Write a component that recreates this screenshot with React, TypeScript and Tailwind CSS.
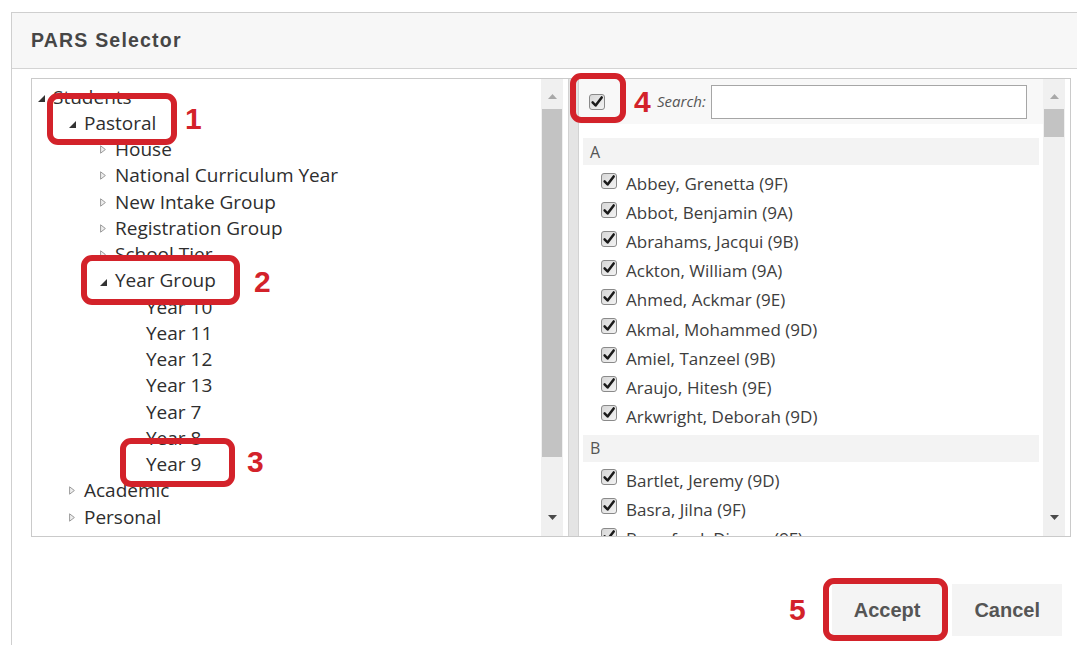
import React from 'react';

type TreeNode = { label: string; level: 0 | 1 | 2 | 3; state: 'open' | 'closed' | 'leaf' };

const TREE: TreeNode[] = [
  { label: 'Students', level: 0, state: 'open' },
  { label: 'Pastoral', level: 1, state: 'open' },
  { label: 'House', level: 2, state: 'closed' },
  { label: 'National Curriculum Year', level: 2, state: 'closed' },
  { label: 'New Intake Group', level: 2, state: 'closed' },
  { label: 'Registration Group', level: 2, state: 'closed' },
  { label: 'School Tier', level: 2, state: 'closed' },
  { label: 'Year Group', level: 2, state: 'open' },
  { label: 'Year 10', level: 3, state: 'leaf' },
  { label: 'Year 11', level: 3, state: 'leaf' },
  { label: 'Year 12', level: 3, state: 'leaf' },
  { label: 'Year 13', level: 3, state: 'leaf' },
  { label: 'Year 7', level: 3, state: 'leaf' },
  { label: 'Year 8', level: 3, state: 'leaf' },
  { label: 'Year 9', level: 3, state: 'leaf' },
  { label: 'Academic', level: 1, state: 'closed' },
  { label: 'Personal', level: 1, state: 'closed' },
];

const PAD: Record<number, string> = {
  0: 'pl-[6px]',
  1: 'pl-[37px]',
  2: 'pl-[68px]',
  3: 'pl-[114px]',
};

const GROUPS: { letter: string; names: string[] }[] = [
  {
    letter: 'A',
    names: [
      'Abbey, Grenetta (9F)',
      'Abbot, Benjamin (9A)',
      'Abrahams, Jacqui (9B)',
      'Ackton, William (9A)',
      'Ahmed, Ackmar (9E)',
      'Akmal, Mohammed (9D)',
      'Amiel, Tanzeel (9B)',
      'Araujo, Hitesh (9E)',
      'Arkwright, Deborah (9D)',
    ],
  },
  {
    letter: 'B',
    names: ['Bartlet, Jeremy (9D)', 'Basra, Jilna (9F)', 'Beresford, Dianne (9F)'],
  },
];

function CheckBox() {
  return (
    <svg width="16" height="16" viewBox="0 0 16 16" className="shrink-0">
      <defs>
        <linearGradient id="cb-fill" x1="0" y1="0" x2="1" y2="1">
          <stop offset="0" stopColor="#d6d6d6" />
          <stop offset="1" stopColor="#f4f4f4" />
        </linearGradient>
      </defs>
      <rect x="0.5" y="0.5" width="15" height="15" rx="2.5" fill="url(#cb-fill)" stroke="#8a8a8a" />
      <path
        d="M3.6 8.3 L6.6 11.5 L12.7 3.4"
        fill="none"
        stroke="#1a1a1a"
        strokeWidth="2.5"
        strokeLinecap="round"
        strokeLinejoin="round"
      />
    </svg>
  );
}

function OpenArrow() {
  return (
    <svg width="7" height="7" viewBox="0 0 7 7" className="mt-[3px]">
      <path d="M7 0 L7 7 L0 7 Z" fill="#333333" />
    </svg>
  );
}

function ClosedArrow() {
  return (
    <svg width="6" height="9" viewBox="0 0 6 9">
      <path d="M0.6 0.8 L5.4 4.5 L0.6 8.2 Z" fill="#efefef" stroke="#9a9a9a" strokeWidth="1" />
    </svg>
  );
}

function ScrollBar({ thumb }: { thumb: string }) {
  return (
    <div className="w-[22px] shrink-0 bg-[#f0f0f0] flex flex-col items-center">
      <div className="h-[30px] w-full flex justify-center pt-[15px]">
        <svg width="9" height="5" viewBox="0 0 9 5">
          <path d="M0 5 L4.5 0 L9 5 Z" fill="#a8a8a8" />
        </svg>
      </div>
      <div className={`w-[20px] bg-[#c3c3c3] ${thumb}`} />
      <div className="flex-1" />
      <div className="h-[30px] w-full flex justify-center pt-[9px]">
        <svg width="9" height="5" viewBox="0 0 9 5">
          <path d="M0 0 L9 0 L4.5 5 Z" fill="#4a4a4a" />
        </svg>
      </div>
    </div>
  );
}

function Marker({ box, num }: { box: string; num: string }) {
  return (
    <div
      className={`absolute border-[6px] border-[#d3222a] rounded-[11px] pointer-events-none ${box}`}
    />
  );
}

function Num({ pos, children }: { pos: string; children: React.ReactNode }) {
  return (
    <div
      className={`absolute text-[30px] leading-none font-bold text-[#d3222a] font-['Liberation_Sans',Arial,sans-serif] ${pos}`}
    >
      {children}
    </div>
  );
}

export default function App() {
  return (
    <div className="relative w-[1077px] h-[645px] overflow-hidden bg-white font-['Open_Sans','Noto_Sans',sans-serif]">
      <div className="ml-[11px] mt-[12px] w-[1066px] h-[633px] border-l border-t border-[#cfcfcf] flex flex-col">
        {/* header */}
        <div className="h-[56px] shrink-0 bg-[#f7f7f7] border-b border-[#d4d4d4] flex items-center pl-[19px]">
          <span className="font-['Liberation_Sans',Arial,sans-serif] font-bold text-[19.5px] tracking-[1.2px] text-[#464646]">
            PARS Selector
          </span>
        </div>

        {/* body */}
        <div className="pt-[9px] pl-[19px] pr-[6px]">
          <div className="h-[459px] border border-[#cacaca] flex overflow-hidden">
            {/* tree */}
            <div className="flex-1 pt-[5px] text-[19px] text-[#2e2e2e] overflow-hidden">
              {TREE.map((n) => (
                <div key={n.label} className={`flex items-center h-[26.25px] whitespace-nowrap ${PAD[n.level]}`}>
                  {n.state !== 'leaf' && (
                    <span className="w-[15px] shrink-0 flex items-center">
                      {n.state === 'open' ? <OpenArrow /> : <ClosedArrow />}
                    </span>
                  )}
                  <span className="leading-none">{n.label}</span>
                </div>
              ))}
            </div>
            <ScrollBar thumb="h-[348px]" />
            <div className="w-[5px] shrink-0" />
            <div className="w-[11px] shrink-0 bg-[#e4e4e4] border-x border-[#d2d2d2]" />

            {/* student list */}
            <div className="w-[464px] shrink-0 flex flex-col overflow-hidden">
              <div className="h-[45px] shrink-0 bg-[#f8f8f8] flex items-center pl-[10px] pr-[16px]">
                <CheckBox />
                <span className="ml-[52px] italic text-[15px] text-[#555]">Search:</span>
                <div className="ml-[5px] flex-1 h-[34px] border border-[#a6a6a6] bg-white" />
              </div>
              <div className="mt-[14px]">
                {GROUPS.map((g, gi) => (
                  <div key={g.letter} className={gi > 0 ? 'mt-[4px]' : ''}>
                    <div className="mx-[4px] h-[27px] bg-[#f3f3f3] flex items-center pl-[7px] text-[16px] text-[#555]">
                      {g.letter}
                    </div>
                    <div className="pt-[4px]">
                      {g.names.map((name) => (
                        <div key={name} className="h-[29.1px] flex items-center pl-[22px] whitespace-nowrap">
                          <span className="mb-[6px]">
                            <CheckBox />
                          </span>
                          <span className="ml-[9px] text-[17px] leading-none text-[#3d3d3d]">{name}</span>
                        </div>
                      ))}
                    </div>
                  </div>
                ))}
              </div>
            </div>
            <ScrollBar thumb="h-[28px]" />
            <div className="w-[5px] shrink-0" />
          </div>
        </div>

        {/* footer */}
        <div className="mt-[47px] flex justify-end gap-[10px] pr-[15px] font-['Liberation_Sans',Arial,sans-serif]">
          <button className="h-[52px] px-[22px] bg-[#f4f4f4] text-[20px] font-bold text-[#555]">Accept</button>
          <button className="h-[52px] px-[22px] bg-[#f4f4f4] text-[20px] font-bold text-[#555]">Cancel</button>
        </div>
      </div>

      {/* numbered step markers */}
      <Marker box="left-[47px] top-[93px] w-[130px] h-[52px]" num="1" />
      <Num pos="left-[185px] top-[104px]">1</Num>
      <Marker box="left-[81px] top-[255px] w-[159px] h-[50px]" num="2" />
      <Num pos="left-[254px] top-[267px]">2</Num>
      <Marker box="left-[120px] top-[438px] w-[115px] h-[49px]" num="3" />
      <Num pos="left-[247px] top-[447px]">3</Num>
      <Marker box="left-[570px] top-[73px] w-[56px] h-[50px]" num="4" />
      <Num pos="left-[634px] top-[87px]">4</Num>
      <Marker box="left-[823px] top-[578px] w-[125px] h-[63px]" num="5" />
      <Num pos="left-[789px] top-[595px]">5</Num>
    </div>
  );
}
